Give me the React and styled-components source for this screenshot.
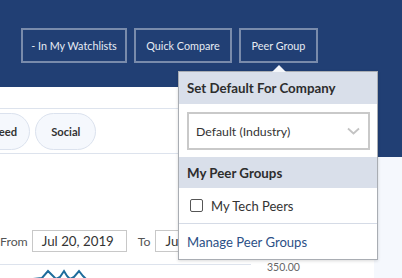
import React from "react";
import styled, { createGlobalStyle } from "styled-components";

const GlobalStyle = createGlobalStyle`
  html, body { margin: 0; padding: 0; }
  body { font-family: Lato, "Open Sans", "Liberation Sans", sans-serif; color: #333; overflow: hidden; }
  * { box-sizing: border-box; }
`;

const Page = styled.div`
  position: relative;
  width: 402px;
  height: 278px;
  overflow: hidden;
  background: linear-gradient(#213f74 0, #213f74 157px, #f5f8fd 157px);
`;

const Header = styled.div`
  height: 87px;
  display: flex;
  align-items: flex-start;
  gap: 7px;
  padding: 28px 0 0 21px;
`;

const NavButton = styled.button`
  height: 35px;
  width: ${(p) => p.$w}px;
  padding: 0;
  border: 2px solid rgba(255, 255, 255, 0.4);
  background: transparent;
  color: #e6ebf3;
  font-family: inherit;
  font-size: 10.8px;
  white-space: nowrap;
  cursor: pointer;
`;

const PeerWrap = styled.div`
  position: relative;
`;

const Popover = styled.div`
  position: absolute;
  top: 43px;
  left: -61px;
  width: 200px;
  background: #fff;
  border: 1px solid #a9adb3;
  box-shadow: 0 1px 3px rgba(0, 0, 0, 0.15);
  z-index: 5;
  &::before {
    content: "";
    position: absolute;
    top: -7px;
    left: 93px;
    border-left: 7px solid transparent;
    border-right: 7px solid transparent;
    border-bottom: 7px solid #f4f6fa;
  }
`;

const PopHeading = styled.div`
  height: ${(p) => p.$h}px;
  display: flex;
  align-items: center;
  padding: 0 8px;
  background: #d9dfea;
  font-weight: 700;
  font-size: 13.3px;
  color: #2d2d2d;
`;

const SelectSection = styled.div`
  padding: 8px 7px 7px 8px;
`;

const SelectBox = styled.div`
  height: 38px;
  border: 2px solid #c9c9c9;
  display: flex;
  align-items: center;
  justify-content: space-between;
  padding: 0 8px 0 7px;
  font-size: 12.3px;
  color: #333;
`;

const CheckRow = styled.label`
  height: 36px;
  display: flex;
  align-items: center;
  gap: 8px;
  padding: 0 11px;
  font-size: 13px;
  color: #333;
  border-bottom: 1px solid #d5dbe6;
`;

const Box = styled.span`
  width: 13px;
  height: 13px;
  border: 1.2px solid #555;
  border-radius: 2px;
  background: #fff;
`;

const ManageLink = styled.a`
  display: flex;
  align-items: center;
  height: 35px;
  padding: 0 8px;
  font-size: 13.1px;
  color: #2b4f86;
  text-decoration: none;
`;

const Card = styled.div`
  width: 374px;
  height: 191px;
  background: #fff;
`;

const TopStrip = styled.div`
  height: 22px;
  border-bottom: 1px solid #dde3ed;
`;

const TabRow = styled.div`
  height: 45px;
  display: flex;
  align-items: center;
  gap: 5px;
  margin-left: -23px;
  border-bottom: 1px solid #dde3ed;
`;

const Pill = styled.span`
  height: 37px;
  display: flex;
  align-items: center;
  padding: 0 ${(p) => p.$pr || 15}px 0 15px;
  border: 1px solid #dbe2ee;
  border-radius: 19px;
  background: #f5f8fd;
  font-size: 11.2px;
  font-weight: 700;
  color: #333;
`;

const DateRow = styled.div`
  display: flex;
  align-items: center;
  margin-top: 76px;
  height: 22px;
  font-size: 12.3px;
  color: #555;
`;

const DateInput = styled.div`
  height: 22px;
  width: ${(p) => p.$w}px;
  margin: 0 ${(p) => p.$mr}px 0 ${(p) => p.$ml}px;
  border: 1px solid #c8c8c8;
  display: flex;
  align-items: center;
  padding-left: 9px;
  font-size: 13.3px;
  color: #333;
`;

const ChartArea = styled.div`
  margin-top: 12px;
  display: grid;
  grid-template-columns: 251px auto;
  column-gap: 16px;
`;

const GridLine = styled.div`
  border-top: 1px solid #dde3ed;
  height: 14px;
`;

const AxisLabel = styled.span`
  font-size: 10.5px;
  color: #666;
  margin-top: -3px;
`;

const Chevron = () => (
  <svg width="13" height="8" viewBox="0 0 13 8">
    <path d="M1 1.5 L6.5 6.5 L12 1.5" fill="none" stroke="#c3c3c3" strokeWidth="1.8" />
  </svg>
);

export default function App() {
  return (
    <Page>
      <GlobalStyle />
      <Header>
        <NavButton $w={106}>- In My Watchlists</NavButton>
        <NavButton $w={98}>Quick Compare</NavButton>
        <PeerWrap>
          <NavButton $w={79}>Peer Group</NavButton>
          <Popover>
            <PopHeading $h={32}>Set Default For Company</PopHeading>
            <SelectSection>
              <SelectBox>
                <span>Default (Industry)</span>
                <Chevron />
              </SelectBox>
            </SelectSection>
            <PopHeading $h={31}>My Peer Groups</PopHeading>
            <CheckRow>
              <Box />
              My Tech Peers
            </CheckRow>
            <ManageLink href="#">Manage Peer Groups</ManageLink>
          </Popover>
        </PeerWrap>
      </Header>
      <Card>
        <TopStrip />
        <TabRow>
          <Pill $pr={12}>Feed</Pill>
          <Pill>Social</Pill>
        </TabRow>
        <DateRow>
          From
          <DateInput $w={95} $ml={4} $mr={11}>Jul 20, 2019</DateInput>
          To
          <DateInput $w={95} $ml={5} $mr={0}>Jul 20, 2020</DateInput>
        </DateRow>
        <ChartArea>
          <GridLine>
            <svg width="251" height="14" viewBox="0 0 251 14">
              <path
                d="M33 12 L42 11 L48 4 L53 9 L56 12 L60 10 L64 4 L67 9 L70 12 L74 10 L79 4 L83 9 L86 12"
                fill="none"
                stroke="#1f6d9c"
                strokeWidth="2"
              />
            </svg>
          </GridLine>
          <AxisLabel>350.00</AxisLabel>
        </ChartArea>
      </Card>
    </Page>
  );
}
